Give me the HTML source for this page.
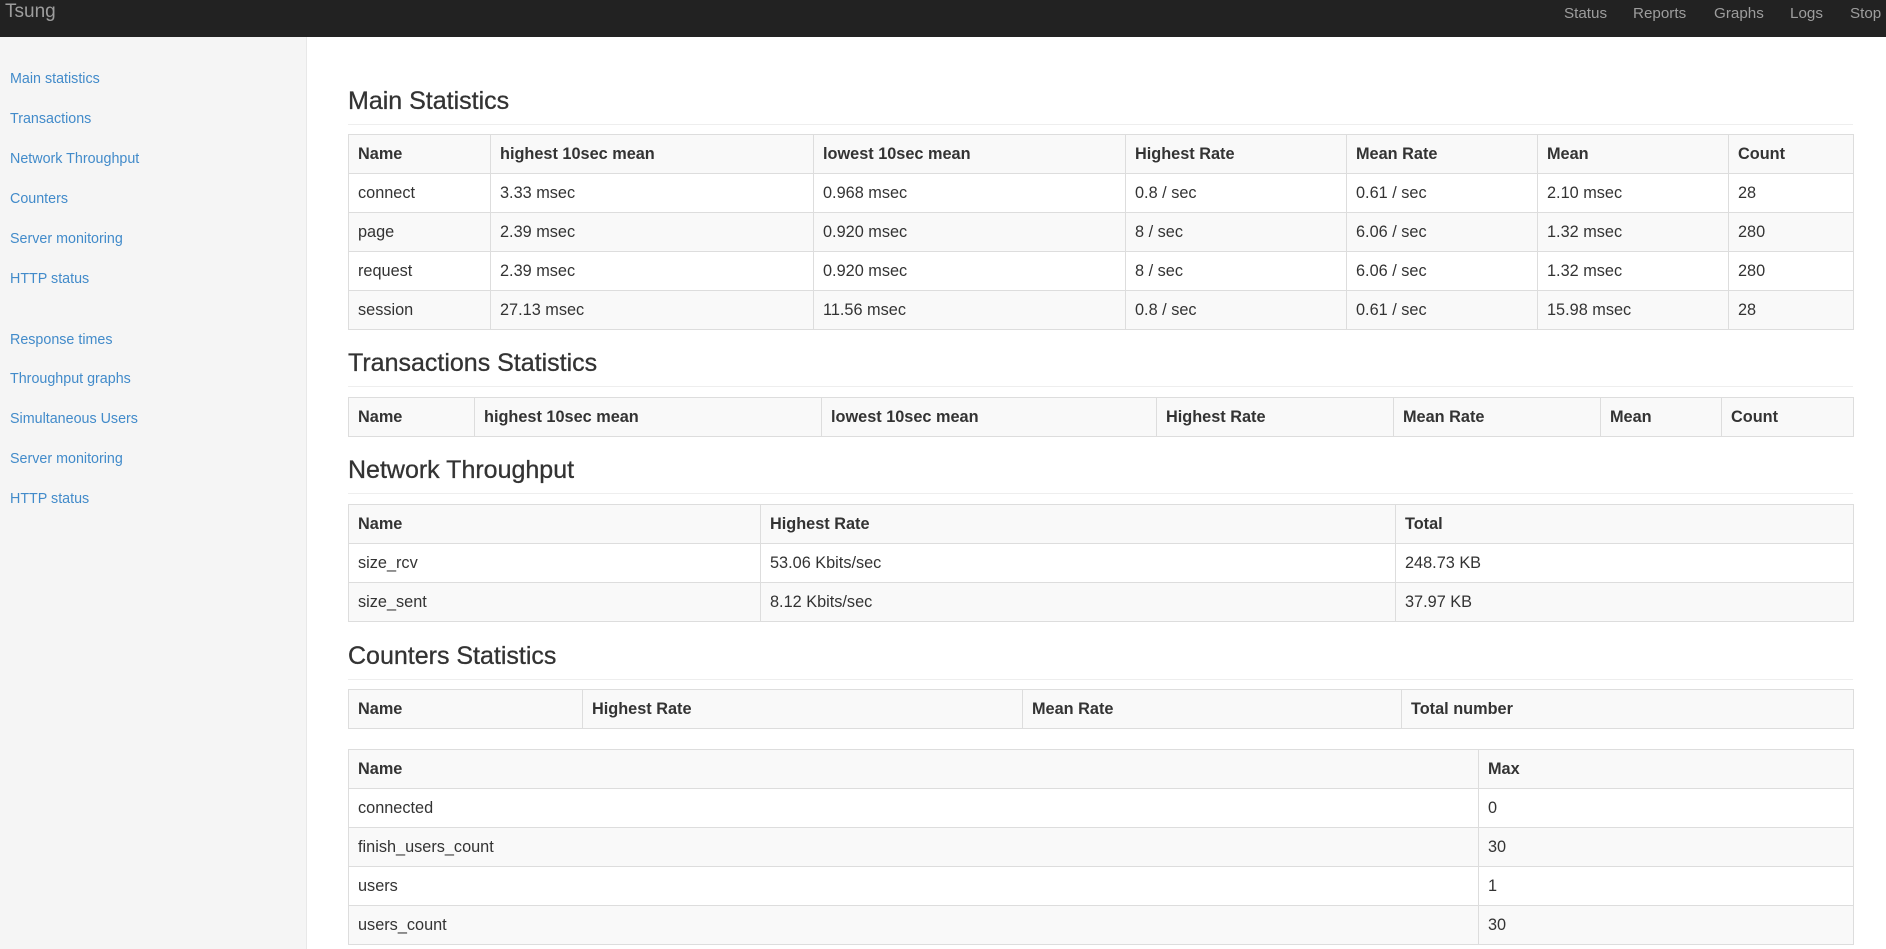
<!DOCTYPE html>
<html><head><meta charset="utf-8"><style>
*{box-sizing:border-box;margin:0;padding:0}
body{width:1886px;height:949px;overflow:hidden;background:#fff;font-family:"Liberation Sans",Arial,sans-serif;color:#333;position:relative}
.nav{position:absolute;left:0;top:0;width:1886px;height:37px;background:#222;}
.nav span{position:absolute;top:1px;line-height:25px;color:#9d9d9d;font-size:15.2px}
.brand{font-size:19px!important;left:5px;line-height:24px!important;top:0!important}
.side{position:absolute;left:0;top:37px;width:307px;height:912px;background:#f5f5f5;border-right:1px solid #e8e8e8}
.side a{position:absolute;left:10px;color:#428bca;font-size:14.3px;text-decoration:none;line-height:18px}
h2{position:absolute;left:348px;width:1505px;font-size:25px;font-weight:500;color:#333;border-bottom:1px solid #eee;line-height:30px;padding-bottom:8px;-webkit-text-stroke:0.3px #333}
table{position:absolute;left:348px;width:1505px;border-collapse:collapse;table-layout:fixed;font-size:16.3px}
td,th{border:1px solid #ddd;height:39px;padding:0 9px;text-align:left;white-space:nowrap;overflow:hidden}
th{font-weight:bold}
tr:nth-child(odd){background:#f9f9f9}
</style></head><body>
<div class="nav">
<span class="brand">Tsung</span>
<span style="left:1564px">Status</span>
<span style="left:1633px">Reports</span>
<span style="left:1714px">Graphs</span>
<span style="left:1790px">Logs</span>
<span style="left:1850px">Stop</span>
</div>
<div class="side">
<a style="top:33px">Main statistics</a>
<a style="top:73px">Transactions</a>
<a style="top:113px">Network Throughput</a>
<a style="top:153px">Counters</a>
<a style="top:193px">Server monitoring</a>
<a style="top:233px">HTTP status</a>
<a style="top:294px">Response times</a>
<a style="top:333px">Throughput graphs</a>
<a style="top:373px">Simultaneous Users</a>
<a style="top:413px">Server monitoring</a>
<a style="top:453px">HTTP status</a>
</div>

<h2 style="top:86px">Main Statistics</h2>
<table style="top:134px">
<colgroup><col style="width:142px"><col style="width:323px"><col style="width:312px"><col style="width:221px"><col style="width:191px"><col style="width:191px"><col style="width:125px"></colgroup>
<tr><th>Name</th><th>highest 10sec mean</th><th>lowest 10sec mean</th><th>Highest Rate</th><th>Mean Rate</th><th>Mean</th><th>Count</th></tr>
<tr><td>connect</td><td>3.33 msec</td><td>0.968 msec</td><td>0.8 / sec</td><td>0.61 / sec</td><td>2.10 msec</td><td>28</td></tr>
<tr><td>page</td><td>2.39 msec</td><td>0.920 msec</td><td>8 / sec</td><td>6.06 / sec</td><td>1.32 msec</td><td>280</td></tr>
<tr><td>request</td><td>2.39 msec</td><td>0.920 msec</td><td>8 / sec</td><td>6.06 / sec</td><td>1.32 msec</td><td>280</td></tr>
<tr><td>session</td><td>27.13 msec</td><td>11.56 msec</td><td>0.8 / sec</td><td>0.61 / sec</td><td>15.98 msec</td><td>28</td></tr>
</table>

<h2 style="top:348px">Transactions Statistics</h2>
<table style="top:397px">
<colgroup><col style="width:126px"><col style="width:347px"><col style="width:335px"><col style="width:237px"><col style="width:207px"><col style="width:121px"><col style="width:132px"></colgroup>
<tr><th>Name</th><th>highest 10sec mean</th><th>lowest 10sec mean</th><th>Highest Rate</th><th>Mean Rate</th><th>Mean</th><th>Count</th></tr>
</table>

<h2 style="top:455px">Network Throughput</h2>
<table style="top:504px">
<colgroup><col style="width:412px"><col style="width:635px"><col style="width:458px"></colgroup>
<tr><th>Name</th><th>Highest Rate</th><th>Total</th></tr>
<tr><td>size_rcv</td><td>53.06 Kbits/sec</td><td>248.73 KB</td></tr>
<tr><td>size_sent</td><td>8.12 Kbits/sec</td><td>37.97 KB</td></tr>
</table>

<h2 style="top:641px">Counters Statistics</h2>
<table style="top:689px">
<colgroup><col style="width:234px"><col style="width:440px"><col style="width:379px"><col style="width:452px"></colgroup>
<tr><th>Name</th><th>Highest Rate</th><th>Mean Rate</th><th>Total number</th></tr>
</table>

<table style="top:749px">
<colgroup><col style="width:1130px"><col style="width:375px"></colgroup>
<tr><th>Name</th><th>Max</th></tr>
<tr><td>connected</td><td>0</td></tr>
<tr><td>finish_users_count</td><td>30</td></tr>
<tr><td>users</td><td>1</td></tr>
<tr><td>users_count</td><td>30</td></tr>
</table>
</body></html>
